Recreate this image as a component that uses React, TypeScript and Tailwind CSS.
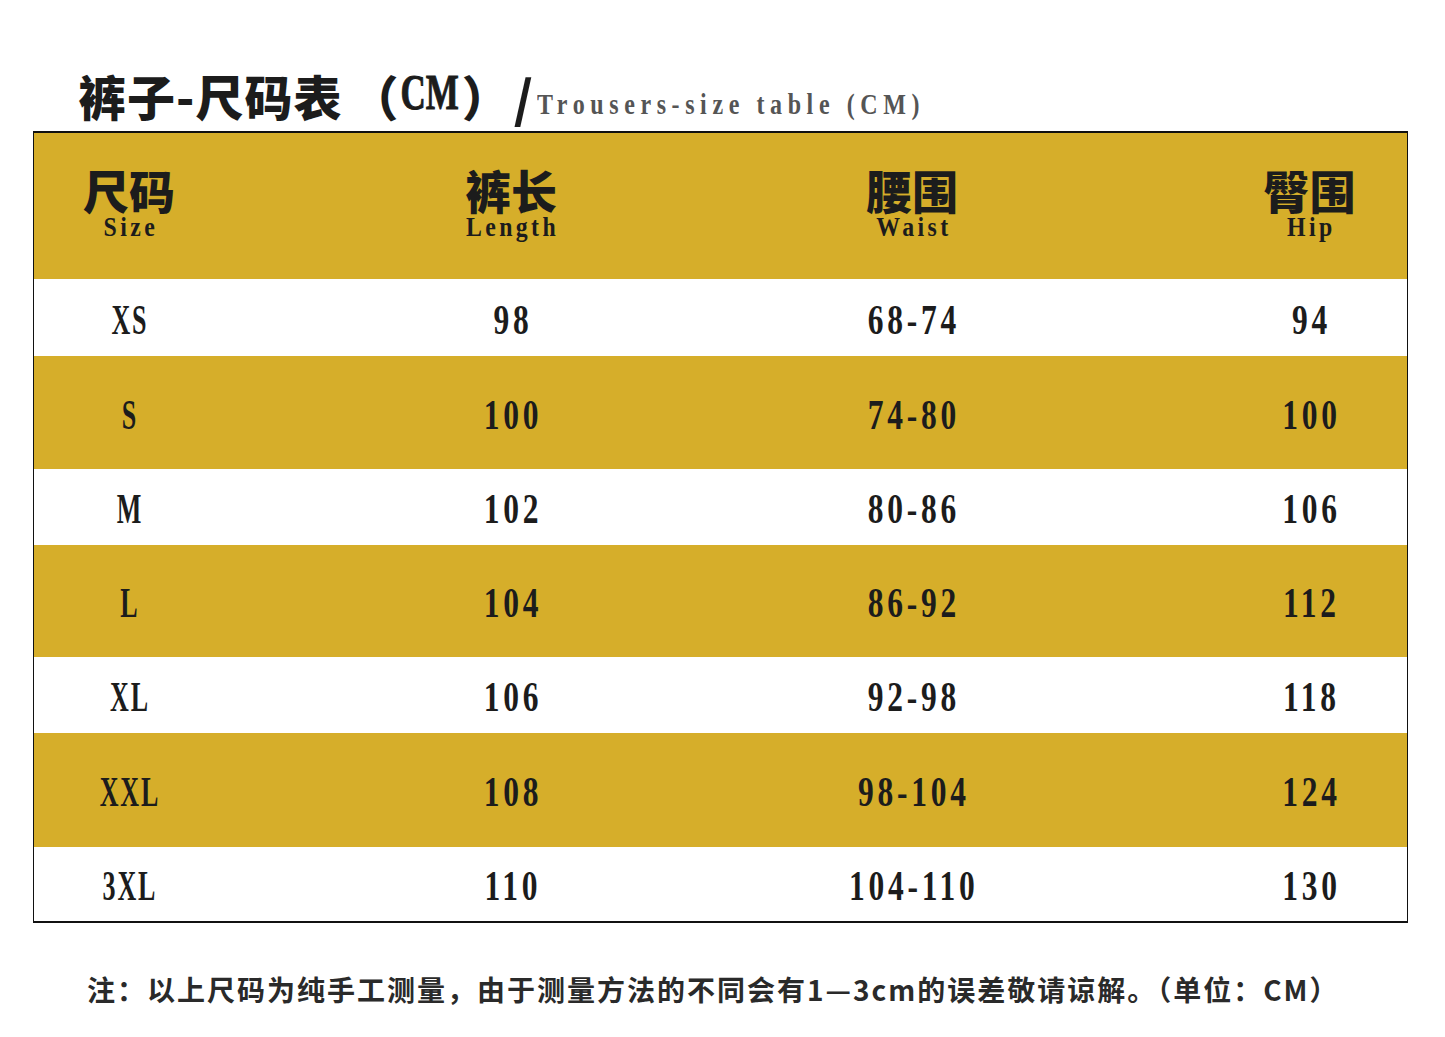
import React from 'react';

const rows = [
  { size: 'XS', length: '98', waist: '68-74', hip: '94', h: 'h-[77px]', gold: false },
  { size: 'S', length: '100', waist: '74-80', hip: '100', h: 'h-[113px]', gold: true },
  { size: 'M', length: '102', waist: '80-86', hip: '106', h: 'h-[76px]', gold: false },
  { size: 'L', length: '104', waist: '86-92', hip: '112', h: 'h-[112px]', gold: true },
  { size: 'XL', length: '106', waist: '92-98', hip: '118', h: 'h-[76px]', gold: false },
  { size: 'XXL', length: '108', waist: '98-104', hip: '124', h: 'h-[114px]', gold: true },
  { size: '3XL', length: '110', waist: '104-110', hip: '130', h: 'h-[74px]', gold: false },
];

const headers = [
  { zh: '尺码', en: 'Size' },
  { zh: '裤长', en: 'Length' },
  { zh: '腰围', en: 'Waist' },
  { zh: '臀围', en: 'Hip' },
];

const serif = "font-['Liberation_Serif','Noto_Sans_CJK_SC',serif]";
const cjk = "font-['Noto_Sans_CJK_SC',serif]";

export default function App() {
  return (
    <div className="w-[1445px] h-[1037px] bg-white text-[#1c1c1c] overflow-hidden">
      {/* title */}
      <div className="flex items-end pl-[78px] pt-[60px] h-[131px] pb-[12px]">
        <span className={`${cjk} font-black text-[48px] leading-none tracking-[1px]`}>裤子-尺码表</span>
        <span className={`${cjk} font-black text-[48px] leading-none ml-[8px]`}>（</span>
        <span className={`${serif} font-bold text-[50px] leading-none inline-block scale-x-[0.7] -mx-[10px] mb-[2px] [-webkit-text-stroke:1px_#1c1c1c]`}>CM</span>
        <span className={`${cjk} font-black text-[48px] leading-none`}>）</span>
        <span className={`${cjk} font-black text-[50px] leading-none ml-[4px] -mb-[2px]`}>/</span>
        <span className={`${serif} font-bold text-[30px] leading-none text-[#555] tracking-[7px] ml-[4px] scale-x-[0.8] origin-left whitespace-nowrap`}>
          Trousers-size table (CM)
        </span>
      </div>

      {/* table */}
      <div className="ml-[33px] w-[1375px] border-t-2 border-x border-b-2 border-[#111]">
        <div className="grid grid-cols-[190px_574px_228px_381px] h-[146px] bg-[#d6ae2a] items-start pt-[32px]">
          {headers.map((hd, i) => (
            <div key={hd.en} className={`flex flex-col items-center ${i === 3 ? 'pl-[186px]' : ''}`}>
              <span className={`${cjk} font-black text-[46px] leading-[48px]`}>{hd.zh}</span>
              <span className={`${serif} font-bold text-[28px] leading-[26px] tracking-[4px] pl-[4px] mt-[1px] scale-x-[0.85]`}>{hd.en}</span>
            </div>
          ))}
        </div>
        {rows.map((r) => (
          <div
            key={r.size}
            className={`grid grid-cols-[190px_574px_228px_381px] items-center pt-[4px] ${r.h} ${r.gold ? 'bg-[#d6ae2a]' : 'bg-white'} ${serif} font-bold text-[42px] leading-none`}
          >
            <div className="text-center tracking-[3px] pl-[3px] scale-x-[0.62]">{r.size}</div>
            <div className="text-center tracking-[5px] pl-[5px] scale-x-[0.75]">{r.length}</div>
            <div className="text-center tracking-[5px] pl-[5px] scale-x-[0.75]">{r.waist}</div>
            <div className="pl-[186px]">
              <div className="text-center tracking-[5px] pl-[5px] scale-x-[0.75]">{r.hip}</div>
            </div>
          </div>
        ))}
      </div>

      {/* note */}
      <div className={`${cjk} font-bold text-[28px] leading-none text-[#2a2a2a] pl-[87px] pt-[52px] tracking-[2px] whitespace-nowrap`}>
        注：以上尺码为纯手工测量，由于测量方法的不同会有1—3cm的误差敬请谅解。（单位：CM）
      </div>
    </div>
  );
}
